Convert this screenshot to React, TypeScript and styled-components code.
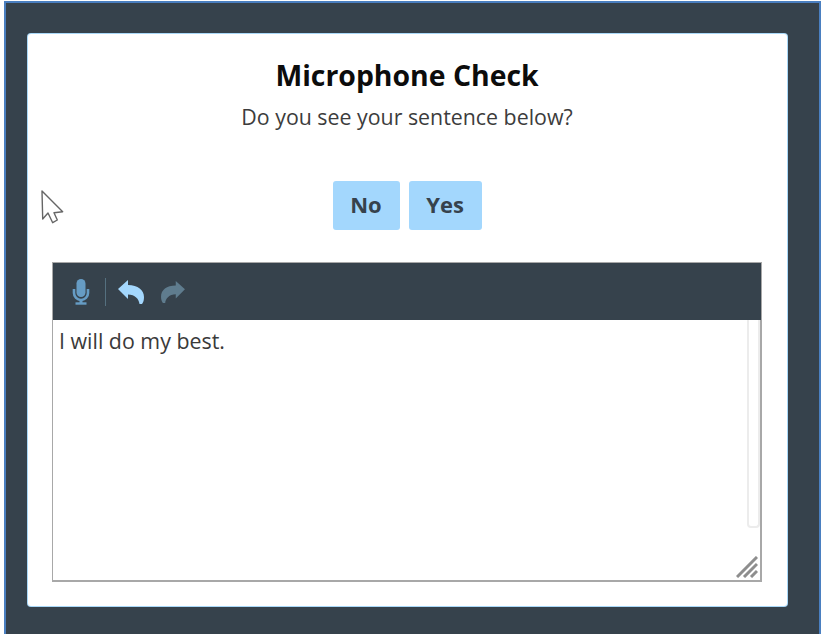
import React from "react";
import styled, { createGlobalStyle } from "styled-components";

const Global = createGlobalStyle`
  html, body { margin: 0; padding: 0; background: #fff; height: 100%; overflow: hidden; }
  #root { height: 100%; }
`;

const Page = styled.div`
  box-sizing: border-box;
  width: 823px;
  height: 634px;
  padding: 1px 2px 0 4px;
  background: #fff;
  font-family: "Open Sans", "Liberation Sans", sans-serif;
`;

const Frame = styled.div`
  box-sizing: border-box;
  height: 633px;
  padding: 31px 32px 27px 22px;
  background: #36424c;
  border: solid #4a7fc0;
  border-width: 2px 2px 0 2px;
`;

const Card = styled.main`
  position: relative;
  box-sizing: border-box;
  height: 572px;
  padding: 24px 25px 24px 24px;
  background: #fff;
  border-radius: 3px;
  box-shadow: 0 0 0 1px #a9d8f8;
  display: flex;
  flex-direction: column;
  align-items: center;
`;

const Title = styled.h1`
  margin: 0;
  font-size: 28.4px;
  line-height: 34px;
  font-weight: 700;
  color: #0c0c0c;
`;

const Subtitle = styled.p`
  margin: 11px 0 0;
  font-size: 21.35px;
  line-height: 27px;
  color: #3c3c3c;
`;

const Actions = styled.div`
  display: flex;
  gap: 9px;
  margin-top: 51px;
`;

const Choice = styled.button<{ $w: number }>`
  width: ${(p) => p.$w}px;
  height: 49px;
  padding: 0 0 4px;
  border: 0;
  border-radius: 3px;
  background: #a3d7fd;
  color: #36424c;
  font-family: inherit;
  font-size: 22px;
  font-weight: 700;
`;

const Editor = styled.section`
  box-sizing: border-box;
  align-self: stretch;
  height: 321px;
  margin-top: 32px;
  border: solid #a8a8a8;
  border-width: 1px 2px 2px 1px;
  display: flex;
  flex-direction: column;
`;

const Toolbar = styled.div`
  height: 57px;
  flex: none;
  margin-right: -1px;
  background: #36424c;
  display: flex;
  align-items: center;
  padding-left: 16px;
`;

const ToolButton = styled.span<{ $ml: number }>`
  display: flex;
  margin-left: ${(p) => p.$ml}px;
`;

const Divider = styled.span`
  width: 1px;
  height: 28px;
  margin-left: 12px;
  background: #55707f;
`;

const Body = styled.div`
  position: relative;
  flex: 1;
  padding: 7px 6px;
  font-size: 21.4px;
  line-height: 28px;
  color: #3a3a3a;
`;

const Scrollbar = styled.div`
  position: absolute;
  top: 0;
  right: 0;
  width: 13px;
  height: 208px;
  box-sizing: border-box;
  border: 2px solid #ececec;
  border-top: 0;
  border-radius: 0 0 4px 4px;
`;

const Grip = styled.svg`
  position: absolute;
  right: 2px;
  bottom: 2px;
`;

const Pointer = styled.svg`
  position: absolute;
  left: 12px;
  top: 154px;
`;

export default function App() {
  return (
    <Page>
      <Global />
      <Frame>
        <Card>
          <Pointer width="25" height="38" viewBox="0 0 25 38">
            <path
              d="M2 3 L2.7 31 L8 25 L12.7 34.7 L17.3 32 L14 24.7 L22.7 23.7 Z"
              fill="#fff"
              stroke="#666"
              strokeWidth="1.4"
              strokeLinejoin="round"
            />
          </Pointer>
          <Title>Microphone Check</Title>
          <Subtitle>Do you see your sentence below?</Subtitle>
          <Actions>
            <Choice $w={67}>No</Choice>
            <Choice $w={73}>Yes</Choice>
          </Actions>
          <Editor>
            <Toolbar>
              <ToolButton $ml={0}>
                <svg width="24" height="28" viewBox="0 0 24 28" fill="none">
                  <rect x="7.5" y="1" width="9" height="18" rx="4.5" fill="#669cc4" />
                  <path d="M5 11v4a7 7 0 0 0 14 0v-4" stroke="#669cc4" strokeWidth="2.6" />
                  <path d="M12 21v4" stroke="#669cc4" strokeWidth="3" />
                  <path d="M6.5 25.5h11" stroke="#669cc4" strokeWidth="2.4" />
                </svg>
              </ToolButton>
              <Divider />
              <ToolButton $ml={11}>
                <svg width="28" height="25" viewBox="0 0 28 25">
                  <path
                    d="M1 10 L11 1 V6 C21 6 27 11 27 18 C27 21 26.5 23 25 25 H22.5 C22 20 18 15.5 11 15.5 V20 Z"
                    fill="#a3d7fd"
                  />
                </svg>
              </ToolButton>
              <ToolButton $ml={15}>
                <svg width="26" height="23" viewBox="0 0 28 25">
                  <path
                    d="M27 10 L17 1 V6 C7 6 1 11 1 18 C1 21 1.5 23 3 25 H5.5 C6 20 10 15.5 17 15.5 V20 Z"
                    fill="#5f7c8e"
                  />
                </svg>
              </ToolButton>
            </Toolbar>
            <Body>
              I will do my best.
              <Scrollbar />
              <Grip width="22" height="22" viewBox="0 0 22 22">
                <path d="M1 21 L21 1 M8 21 L21 8 M15 21 L21 15" stroke="#8e8e8e" strokeWidth="3" />
              </Grip>
            </Body>
          </Editor>
        </Card>
      </Frame>
    </Page>
  );
}
